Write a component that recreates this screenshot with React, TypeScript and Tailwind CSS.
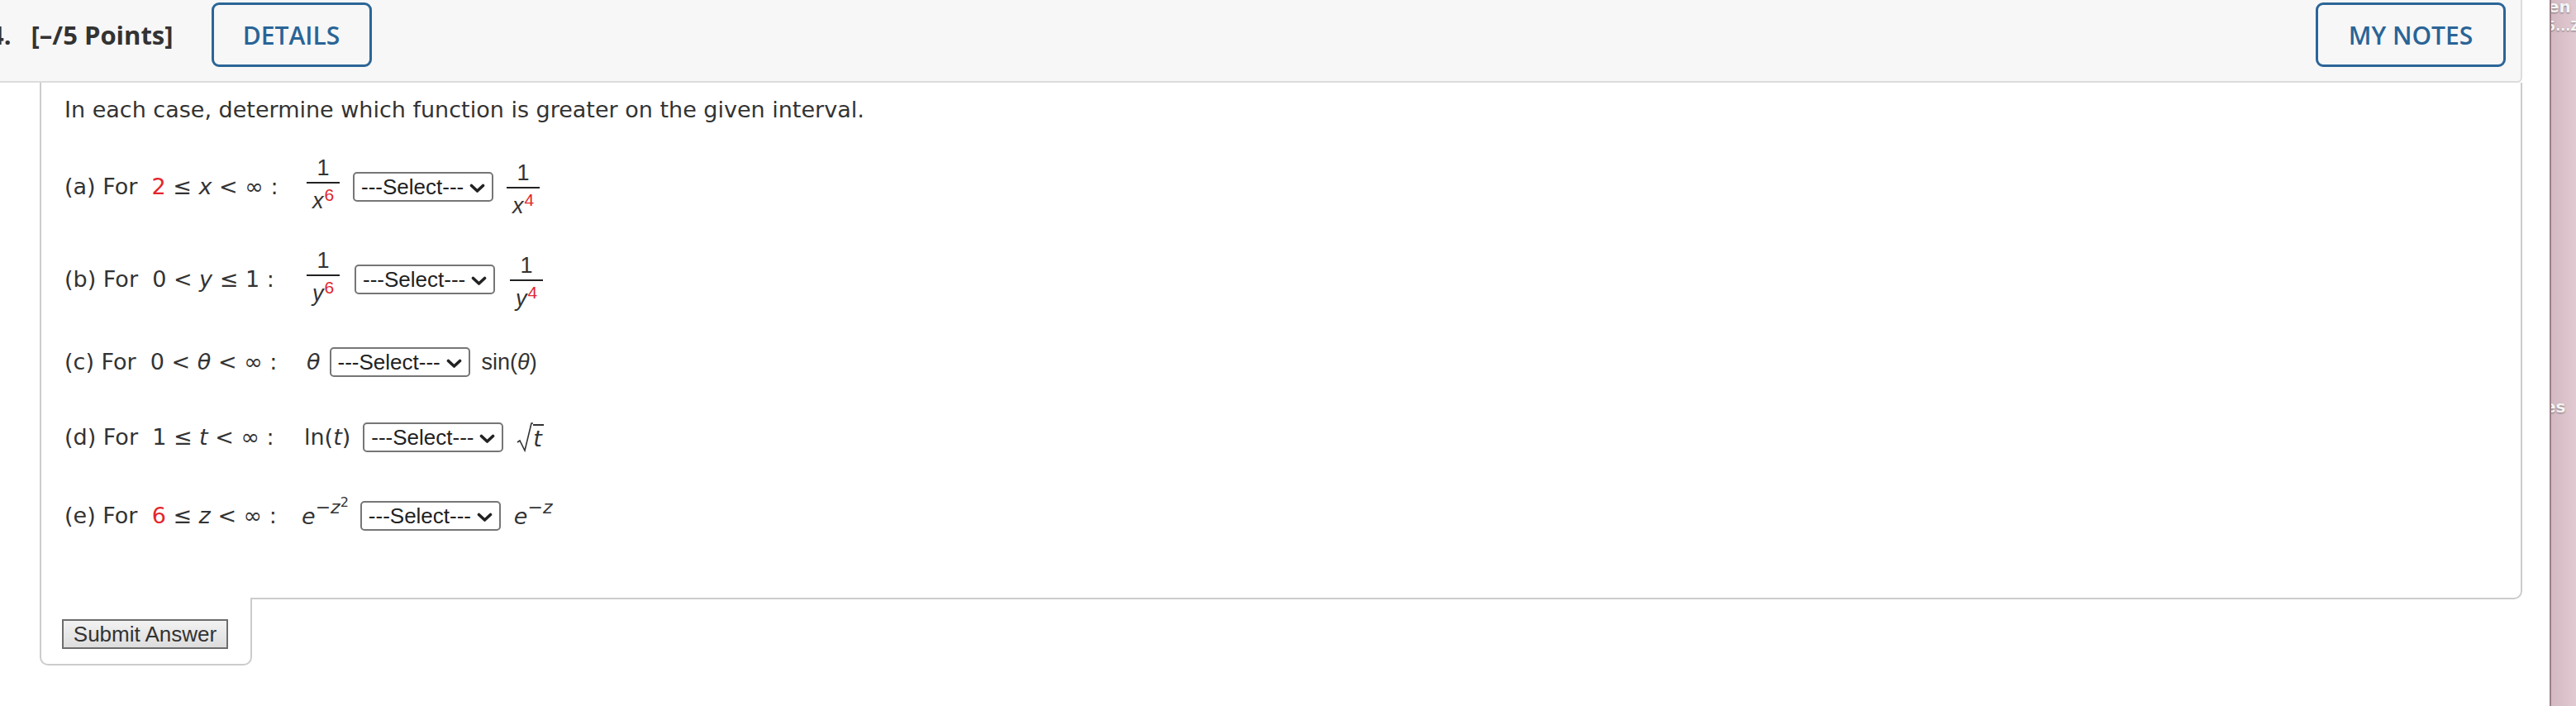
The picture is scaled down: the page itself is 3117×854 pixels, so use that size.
import React from "react";

const red = "text-[#e3262b]";

function Select() {
  return (
    <span className="relative inline-flex h-[36px] w-[170px] shrink-0 items-center rounded-[5px] border-2 border-[#767676] bg-white pl-[8px] font-['Liberation_Sans',Arial,sans-serif] text-[26px] leading-none text-[#222]">
      ---Select---
      <svg className="absolute right-[8px] top-[12px]" width="19" height="12" viewBox="0 0 19 12">
        <path d="M2.5 2.5 L9.5 9 L16.5 2.5" stroke="#222" strokeWidth="3.6" fill="none" strokeLinecap="round" strokeLinejoin="round" />
      </svg>
    </span>
  );
}

function Frac({ v, e }: { v: string; e: string }) {
  return (
    <span className="inline-flex w-[40px] flex-col items-center font-['Liberation_Sans',Arial,sans-serif] text-[27px] text-[#333]">
      <span className="flex h-[21px] items-end leading-none">1</span>
      <span className="mt-[3px] h-[2px] w-[40px] bg-[#222]" />
      <span className="flex h-[35px] items-end leading-none">
        <i>{v}</i>
        <span className={`${red} relative -top-[11px] ml-[1px] text-[21px] leading-none`}>{e}</span>
      </span>
    </span>
  );
}

function Row({ h, label, children }: { h: string; label: React.ReactNode; children: React.ReactNode }) {
  return (
    <div className={`grid grid-cols-[293px_auto] items-center ${h}`}>
      <div className="whitespace-pre">{label}</div>
      <div className="flex items-center">{children}</div>
    </div>
  );
}

export default function App() {
  return (
    <div className="flex min-h-[854px] w-[3117px] overflow-hidden bg-white font-['DejaVu_Sans',Verdana,sans-serif] text-[#333]">
      {/* question */}
      <div className="w-[3052px] shrink-0">
        <header className="flex h-[100px] items-start justify-between rounded-br-[6px] border-b-2 border-r-2 border-[#dcdcdc] bg-[#f7f7f7] pt-[3px] pr-[18px] font-['Open_Sans',sans-serif]">
          <div className="flex items-center">
            <span className="ml-[-13px] flex h-[78px] items-center text-[31px] font-bold text-[#333]">4.</span>
            <span className="ml-[24px] flex h-[78px] items-center text-[31px] font-bold text-[#333]">[–/5 Points]</span>
            <button className="ml-[46px] flex h-[78px] w-[194px] items-center justify-center rounded-[9px] border-[3px] border-[#2b6597] text-[30px] font-semibold text-[#2a6496]">
              DETAILS
            </button>
          </div>
          <button className="flex h-[78px] w-[230px] items-center justify-center rounded-[9px] border-[3px] border-[#2b6597] text-[30px] font-semibold text-[#2a6496]">
            MY NOTES
          </button>
        </header>

        <div className="ml-[48px]">
          <div className="rounded-br-[10px] border-x-2 border-b-2 border-[#cccccc] pl-[28px] pb-[47px] text-[27px]">
            <div className="flex h-[66px] items-center">In each case, determine which function is greater on the given interval.</div>

            <Row h="h-[120px]" label={<>(a) For  <span className={red}>2</span> ≤ <i>x</i> &lt; ∞ :</>}>
              <Frac v="x" e="6" />
              <span className="ml-[16px]"><Select /></span>
              <span className="ml-[16px]"><Frac v="x" e="4" /></span>
            </Row>

            <Row h="h-[104px]" label={<>(b) For  0 &lt; <i>y</i> ≤ 1 :</>}>
              <Frac v="y" e="6" />
              <span className="ml-[18px]"><Select /></span>
              <span className="ml-[18px]"><Frac v="y" e="4" /></span>
            </Row>

            <Row h="h-[96px]" label={<>(c) For  0 &lt; <i>θ</i> &lt; ∞ :</>}>
              <i>θ</i>
              <span className="ml-[11px]"><Select /></span>
              <span className="ml-[14px] font-['Liberation_Sans',Arial,sans-serif] text-[27px]">sin(<i>θ</i>)</span>
            </Row>

            <Row h="h-[86px]" label={<>(d) For  1 ≤ <i>t</i> &lt; ∞ :</>}>
              <span className="-ml-[3px]">ln(<i>t</i>)</span>
              <span className="ml-[15px]"><Select /></span>
              <span className="ml-[16px] inline-flex items-end">
                <svg width="20" height="36" viewBox="0 0 20 36" className="shrink-0">
                  <path d="M1 24 L4 22 L10 34 L18 1 L20 1" stroke="#333" strokeWidth="1.6" fill="none" />
                </svg>
                <span className="border-t-2 border-[#333] pr-[2px] leading-[32px]"><i>t</i></span>
              </span>
            </Row>

            <Row h="h-[104px]" label={<>(e) For  <span className={red}>6</span> ≤ <i>z</i> &lt; ∞ :</>}>
              <span className="-ml-[6px] whitespace-nowrap leading-none">
                <i>e</i>
                <span className="relative -top-[13px] text-[22px]">−<i>z</i><span className="relative -top-[8px] text-[16px]">2</span></span>
              </span>
              <span className="ml-[14px]"><Select /></span>
              <span className="ml-[16px] whitespace-nowrap leading-none">
                <i>e</i>
                <span className="relative -top-[13px] text-[22px]">−<i>z</i></span>
              </span>
            </Row>
          </div>

          <div className="-mt-[2px] w-[257px] rounded-b-[10px] border-x-2 border-b-2 border-[#cccccc] bg-white pl-[25px] pt-[26px] pb-[18px]">
            <button className="flex h-[36px] w-[201px] items-center justify-center border-2 border-[#6d6d6d] bg-gradient-to-b from-[#f2f2f2] to-[#dddddd] font-['Liberation_Sans',Arial,sans-serif] text-[26px] leading-none text-[#333]">
              Submit Answer
            </button>
          </div>
        </div>
      </div>

      {/* gap */}
      <div className="w-[33px] shrink-0 bg-white" />

      {/* background window strip */}
      <div className="relative w-[32px] shrink-0 overflow-hidden border-l-2 border-[#9c8089] bg-gradient-to-r from-[#d3b9c2] to-[#e2cad2] font-['DejaVu_Sans',sans-serif] font-bold text-[#f4f4f4] [text-shadow:0_1px_2px_rgba(0,0,0,0.4)]">
        <div className="absolute left-[-4px] top-[-2px] whitespace-nowrap text-[20px] leading-none">en S</div>
        <div className="absolute left-[-6px] top-[24px] whitespace-nowrap text-[16px] leading-none">5...Z</div>
        <div className="absolute left-[-8px] top-[482px] whitespace-nowrap text-[20px] leading-none">es</div>
      </div>
    </div>
  );
}
